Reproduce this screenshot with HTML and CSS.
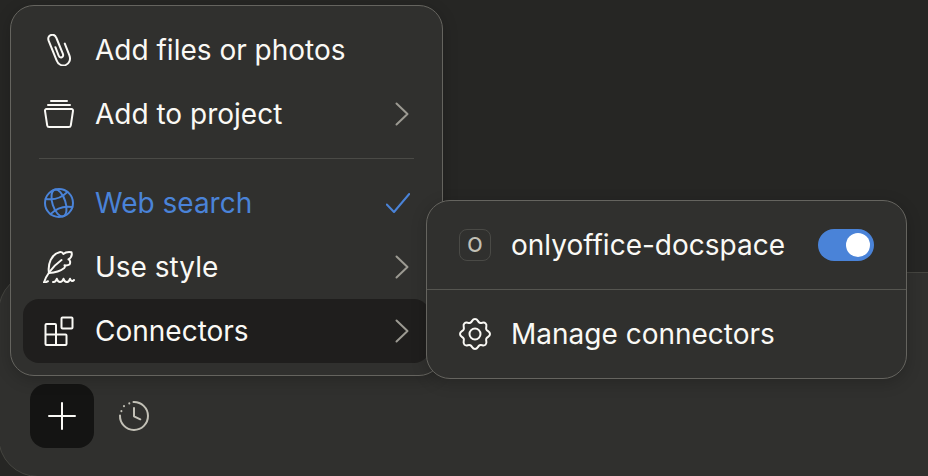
FILE: index.html
```
<!DOCTYPE html>
<html lang="en">
  <head>
    <meta charset="UTF-8" />
    <meta name="viewport" content="width=device-width, initial-scale=1.0" />
    <title>Connectors</title>
    <link rel="stylesheet" href="styles.css">
  </head>
  <body>
    <main class="composer">
      <div class="toolbar">
        <button class="tool tool-add" aria-label="Add">
          <svg class="icon" viewBox="0 0 32 32"><path d="M16 3v26M3 16h26" /></svg>
        </button>
        <button class="tool" aria-label="History">
          <svg class="icon" viewBox="0 0 32 32">
            <path d="M15.500 2A14 14 0 1 1 2 15.500M16 8v8.300l6.300 3" />
            <path d="M11.300 3.300v.3M6 6v.3M3.400 11v.3" />
          </svg>
        </button>
      </div>
    </main>

    <nav class="menu" aria-label="Add menu">
      <button class="item">
        <svg class="icon" viewBox="0 0 32 32">
          <path d="M21.800 9.600l4.600 11.700c1.700 4.600-.3 8.600-3.900 9.800-3.600 1.100-7.300-.6-8.900-4.700L5.700 6.900C4.600 4 5.700 1.700 8 1c2.300-.7 4.400.4 5.400 3l6.500 15.800c.6 1.700 0 3-1.100 3.500-1.300.4-2.600-.2-3.200-1.800l-3.200-8.300" />
        </svg>
        <span class="label">Add files or photos</span>
      </button>
      <button class="item">
        <svg class="icon" viewBox="0 0 32 32">
          <path d="M8 3h16M5 7h22M3.500 11h25a1.500 1.500 0 0 1 1.500 1.800l-2.200 14.500a2 2 0 0 1-2 1.700H6.200a2 2 0 0 1-2-1.700L2 12.800A1.500 1.500 0 0 1 3.500 11z" />
        </svg>
        <span class="label">Add to project</span>
        <svg class="arrow" viewBox="0 0 24 32"><path d="M10.500 5.500l11 10.500-11 10.500" /></svg>
      </button>
      <hr class="divider">
      <button class="item active">
        <svg class="icon" viewBox="0 0 32 32">
          <circle cx="16" cy="16" r="14" />
          <g transform="rotate(-18 16 16)">
            <ellipse cx="16" cy="16" rx="6.500" ry="14" />
            <path d="M4.500 8q11.500 6 23 0M4.500 24q11.500-6 23 0" />
          </g>
        </svg>
        <span class="label">Web search</span>
        <svg class="check" viewBox="0 0 24 32"><path d="M.8 17.500L8 25 23.200 7" /></svg>
      </button>
      <button class="item">
        <svg class="icon" viewBox="0 0 32 32">
          <path d="M1 31.500c1.500-5.500 7-15 17.500-22.500" />
          <path d="M6 22C4.500 13 8.500 3 16.500 1.200c2-.4 3.200.3 3.800 1.800 2-1.800 5-2.300 8.200-1.800.8 3-.2 5.500-3 7.200 2 1 2 3.500 1 5.100-1.400.9-3.500 1.100-5 .8.600 1 .5 1.800-.2 2.700-3.800 3-9 4.700-15.300 5z" />
          <path d="M1 31.500c1.500.3 2.500-.9 4-1.300M10 31c1.800.2 3-1 3.800-3.200.6 2 1.700 3.200 3.200 3.200s2.700-1.200 3.500-3.200c.6 2 1.700 3.200 3.200 3.200s2.600-1.200 3.300-3.200c.5 2 2.500 3 4 1.200" />
        </svg>
        <span class="label">Use style</span>
        <svg class="arrow" viewBox="0 0 24 32"><path d="M10.500 5.500l11 10.500-11 10.500" /></svg>
      </button>
      <button class="item selected">
        <svg class="icon" viewBox="0 0 32 32">
          <path d="M3.500 9H12a1 1 0 0 1 1 1v9.500h9.500a1 1 0 0 1 1 1V29a1 1 0 0 1-1 1h-19a1 1 0 0 1-1-1V10a1 1 0 0 1 1-1zM13 30V19.500H2.500" />
          <rect x="18.500" y="2.500" width="11" height="11" rx="1" />
        </svg>
        <span class="label">Connectors</span>
        <svg class="arrow" viewBox="0 0 24 32"><path d="M10.500 5.500l11 10.500-11 10.500" /></svg>
      </button>
    </nav>

    <section class="submenu" aria-label="Connectors">
      <label class="row">
        <span class="badge">O</span>
        <span class="label">onlyoffice-docspace</span>
        <input class="toggle" type="checkbox" checked>
      </label>
      <button class="row">
        <svg class="icon" viewBox="0 0 32 32">
          <g transform="translate(16 16)">
            <circle r="5.500" />
            <path d="M-4.700-11.300C-2.500-12.200-3-15 0-15S2.500-12.200 4.700-11.300 8.500-12.700 10.600-10.600 10.400-6.900 11.300-4.700 15-3 15 0 12.200 2.500 11.300 4.700 12.700 8.500 10.600 10.600 6.900 10.400 4.700 11.300 3 15 0 15-2.500 12.200-4.700 11.300-8.500 12.700-10.600 10.600-10.400 6.900-11.300 4.700-15 3-15 0-12.200-2.500-11.300-4.700-12.700-8.500-10.600-10.600-6.900-10.400-4.700-11.300z" />
          </g>
        </svg>
        <span class="label">Manage connectors</span>
      </button>
    </section>
  </body>
</html>
```
FILE: styles.css
```
* {
  box-sizing: border-box;
}
body {
  margin: 0;
  min-height: 100vh;
  display: flex;
  flex-direction: column;
  justify-content: flex-end;
  background: #262624;
  color: #faf9f5;
  font-family: "Inter", sans-serif;
  font-size: 28px;
  line-height: 40px;
  overflow: hidden;
}
button {
  border: none;
  background: none;
  color: inherit;
  font: inherit;
  text-align: left;
  cursor: pointer;
}
svg {
  flex: none;
  height: 32px;
  fill: none;
  stroke: currentColor;
  stroke-width: 2;
  stroke-linecap: round;
  stroke-linejoin: round;
}
.icon {
  width: 32px;
}
.label {
  flex: 1;
  white-space: nowrap;
}

/* Message box, runs past the window on both sides */
.composer {
  margin: 0 -40px -1px -2px;
  padding: 111px 31px 28px;
  border: 1px solid #454540;
  border-radius: 40px;
  background: #30302e;
}
.toolbar {
  display: flex;
  gap: 8px;
}
.tool {
  display: flex;
  align-items: center;
  justify-content: center;
  width: 64px;
  height: 64px;
  padding: 0;
  border-radius: 16px;
  color: #c2c0b6;
}
.tool-add {
  background: #141413;
  color: #faf9f5;
}

.menu,
.submenu {
  position: absolute;
  border: 1px solid #65645f;
  border-radius: 24px;
  background: #30302e;
  box-shadow: 0 4px 16px rgba(0, 0, 0, 0.2);
}
.menu {
  top: 5px;
  left: 10px;
  width: 433px;
  padding: 12px;
}
.item {
  display: flex;
  align-items: center;
  gap: 20px;
  width: 100%;
  height: 64px;
  padding: 0 20px;
  border-radius: 16px;
}
.item.active {
  color: #4a83d8;
}
.item.selected {
  background: #1f1e1d;
}
.arrow,
.check {
  width: 24px;
}
.arrow {
  color: #9c9a92;
}
.divider {
  height: 1px;
  margin: 12px 16px;
  border: none;
  background: #4a4a46;
}

.submenu {
  top: 200px;
  left: 426px;
  width: 481px;
}
.row {
  display: flex;
  align-items: center;
  gap: 20px;
  width: 100%;
  height: 88px;
  padding: 0 32px;
}
.row + .row {
  height: 89px;
  border-top: 1px solid #555550;
}
.badge {
  display: flex;
  align-items: center;
  justify-content: center;
  width: 32px;
  height: 32px;
  border: 1px solid #4a4a46;
  border-radius: 8px;
  color: #c2c0b6;
  font-size: 20px;
  font-weight: 500;
}
.toggle {
  appearance: none;
  display: flex;
  width: 56px;
  height: 32px;
  margin: 0;
  padding: 4px;
  border-radius: 16px;
  background: #65645f;
}
.toggle::before {
  content: "";
  width: 24px;
  height: 24px;
  border-radius: 50%;
  background: #fff;
}
.toggle:checked {
  justify-content: flex-end;
  background: #4a83d8;
}
```
